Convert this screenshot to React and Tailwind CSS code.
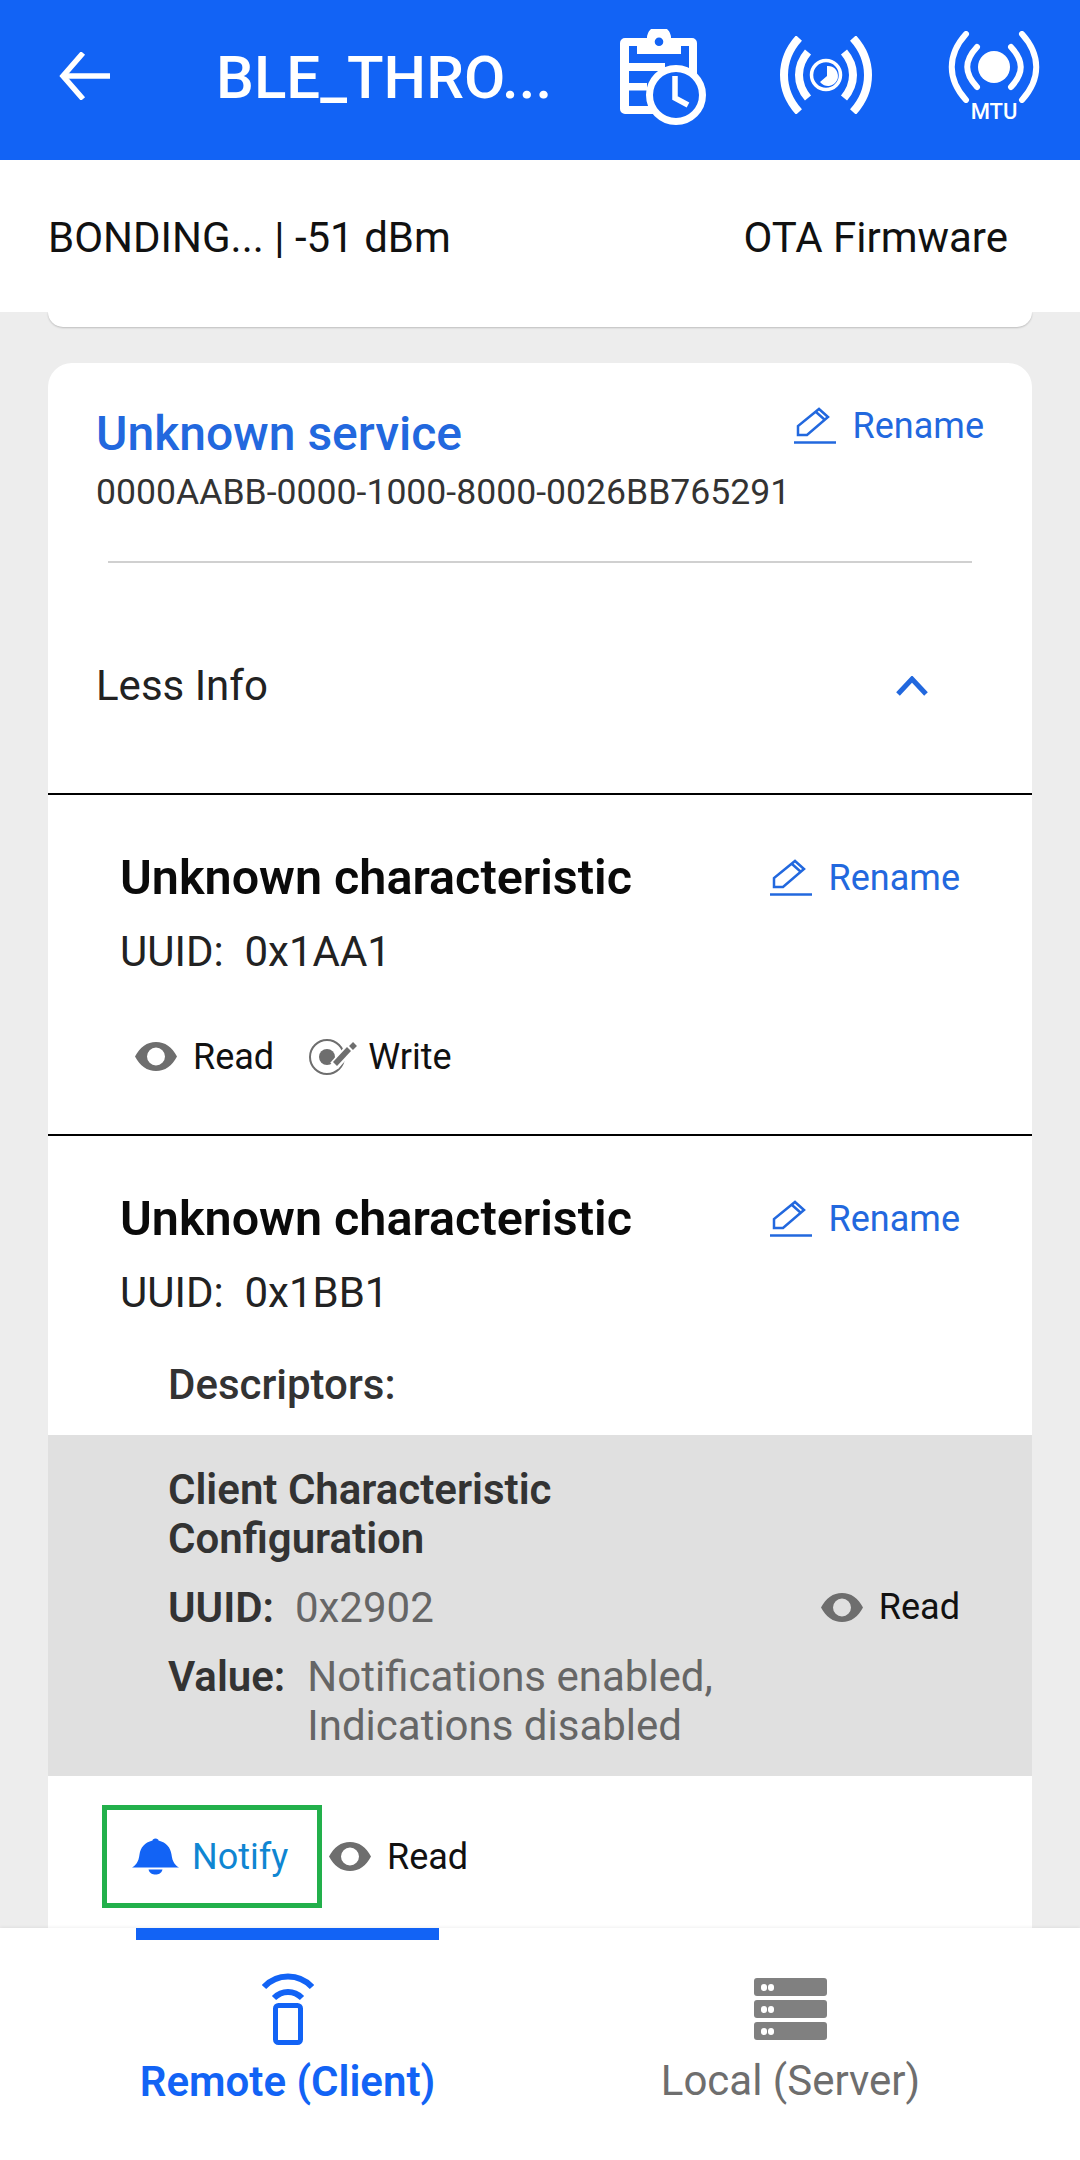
import React from 'react';

const BackIcon = () => (
  <svg width="52" height="48" viewBox="0 0 52 48" fill="none" stroke="white" strokeWidth="5.5">
    <path d="M52 24H6" />
    <path d="M25 1L5 24L25 47" />
  </svg>
);

const LogIcon = () => (
  <svg width="88" height="96" viewBox="0 0 88 96" fill="none">
    <path
      fillRule="evenodd"
      fill="white"
      d="M5 9H27A12 12 0 0 1 51 9H72A5 5 0 0 1 77 14V50H69V17H61V25H17V17H9V77H40V85H5A5 5 0 0 1 0 80V14A5 5 0 0 1 5 9ZM39 8.500A4.300 4.300 0 1 0 39 17.100A4.300 4.300 0 1 0 39 8.500Z"
    />
    <rect x="9" y="34" width="36" height="8" fill="white" />
    <rect x="9" y="54" width="18" height="7.500" fill="white" />
    <circle cx="56" cy="66" r="26.500" fill="#1263F5" stroke="white" strokeWidth="7" />
    <path d="M55 47V69L68 76" stroke="white" strokeWidth="5.500" />
  </svg>
);

const ScanClockIcon = () => (
  <svg width="96" height="78" viewBox="0 0 96 78" fill="none" stroke="white">
    <path d="M21 2C1 24 1 54 21 76" strokeWidth="8" />
    <path d="M75 2C95 24 95 54 75 76" strokeWidth="8" />
    <path d="M30 16C18 30 18 48 30 62" strokeWidth="8" />
    <path d="M66 16C78 30 78 48 66 62" strokeWidth="8" />
    <circle cx="48" cy="39" r="14.500" strokeWidth="3.500" />
    <path d="M49 30V40L42 46A10 10 0 1 0 49 30Z" fill="white" stroke="none" />
  </svg>
);

const MtuIcon = () => (
  <div className="relative flex h-[88px] w-[96px] flex-col items-center">
    <svg width="96" height="72" viewBox="0 0 96 72" fill="none" stroke="white" strokeLinecap="round" strokeWidth="6">
      <path d="M20 3C1 24 1 48 20 69" />
      <path d="M76 3C95 24 95 48 76 69" />
      <path d="M31 16C18 30 18 42 31 56" />
      <path d="M65 16C78 30 78 42 65 56" />
      <circle cx="48" cy="36" r="16" fill="white" stroke="none" />
    </svg>
    <span className="absolute top-[69px] text-[22px] leading-[24px] font-medium text-white">MTU</span>
  </div>
);

const PencilIcon = () => (
  <svg width="42" height="38" viewBox="0 0 42 38" fill="none" stroke="#2268DE" strokeWidth="2.500">
    <path d="M4 28V19L25 2L34 10L13 28Z" />
    <path d="M22 5L31 13" />
    <path d="M0 35.500H42" />
  </svg>
);

const EyeIcon = () => (
  <svg width="42" height="29" viewBox="0 0 42 29">
    <path fillRule="evenodd" fill="#6E6E6E" d="M0 14.500C5 5 12 0 21 0C30 0 37 5 42 14.500C37 24 30 29 21 29C12 29 5 24 0 14.500ZM21 5.500A9 9 0 1 0 21 23.500A9 9 0 0 0 21 5.500Z" />
  </svg>
);

const WriteIcon = () => (
  <svg width="48" height="36" viewBox="0 0 48 36" fill="none">
    <circle cx="18" cy="18" r="17" stroke="#6E6E6E" strokeWidth="2" />
    <circle cx="18" cy="18" r="8" fill="#6E6E6E" />
    <path d="M25 27L41 9" stroke="white" strokeWidth="10" />
    <path d="M26 25L40 10" stroke="#6E6E6E" strokeWidth="5.500" />
    <path d="M42 9L46 5" stroke="#6E6E6E" strokeWidth="5.500" />
  </svg>
);

const BellIcon = () => (
  <svg width="47" height="37" viewBox="0 0 47 36">
    <path fill="#1263F5" d="M23.500 0C25.500 0 26.500 1 26.500 2C34.500 4 38.500 9 39.500 16C40.500 24 43.500 27 47 29H0C3.500 27 6.500 24 7.500 16C8.500 9 12.500 4 20.500 2C20.500 1 21.500 0 23.500 0Z" />
    <path fill="#1263F5" d="M16.500 31H30.500C29.500 35 26.500 36 23.500 36C20.500 36 17.500 35 16.500 31Z" />
  </svg>
);

const ClientIcon = () => (
  <svg width="52" height="72" viewBox="0 0 52 72" fill="none">
    <path d="M2 14C15 0 37 0 50 14" stroke="#1263F5" strokeWidth="6" />
    <path d="M12 25C20 17 32 17 40 25" stroke="#1263F5" strokeWidth="6" />
    <rect x="13.500" y="32.500" width="25" height="37" rx="3" stroke="#1263F5" strokeWidth="5" />
  </svg>
);

const ServerRow = () => (
  <div className="flex h-[18px] w-[73px] items-center gap-[1px] rounded-[3px] bg-[#808080] pl-[7px]">
    <span className="h-[7px] w-[6px] rounded-full bg-white" />
    <span className="h-[7px] w-[6px] rounded-full bg-white" />
  </div>
);

const Rename = () => (
  <div className="flex items-center gap-[17px] text-[#2268DE]">
    <PencilIcon />
    <span className="text-[36px] leading-[40px]">Rename</span>
  </div>
);

const Characteristic = ({ uuid }) => (
  <div className="px-[72px]">
    <div className="flex items-center justify-between">
      <h3 className="text-[48.5px] leading-[56px] font-semibold text-[#0a0a0a]">Unknown characteristic</h3>
      <Rename />
    </div>
    <p className="mt-[22px] text-[42px] leading-[48px] text-[#222]">UUID:&nbsp; {uuid}</p>
  </div>
);

export default function App() {
  return (
    <div className="flex h-[2160px] w-[1080px] flex-col overflow-hidden bg-[#ededed] font-['Roboto',sans-serif]">
      <header className="z-10 flex h-[160px] shrink-0 items-center bg-[#1263F5] pl-[58px]">
        <div className="mt-[-8px]"><BackIcon /></div>
        <h1 className="mb-[4px] ml-[106px] w-[346px] whitespace-nowrap text-[60px] leading-[60px] font-medium text-white">BLE_THRO...</h1>
        <div className="mt-[-6px] ml-[58px]"><LogIcon /></div>
        <div className="mt-[-10px] ml-[70px]"><ScanClockIcon /></div>
        <div className="mt-[-10px] ml-[72px]"><MtuIcon /></div>
      </header>

      <div className="flex h-[152px] shrink-0 items-center justify-between bg-white px-[48px] pt-[4px] text-[42px] leading-[48px] text-[#111]">
        <span>BONDING... | -51 dBm</span>
        <span className="pr-[24px]">OTA Firmware</span>
      </div>

      <div className="min-h-0 flex-1 overflow-hidden px-[48px]">
        <div className="h-[15px] rounded-b-[24px] bg-white shadow-[0_1px_2px_rgba(0,0,0,0.2)]" />

        <div className="mt-[36px] rounded-t-[24px] bg-white pb-[40px]">
          <div className="px-[48px] pt-[41px]">
            <div className="flex items-start justify-between">
              <h2 className="text-[48px] leading-[60px] font-medium text-[#2268DE]">Unknown service</h2>
              <div className="pt-[2px]"><Rename /></div>
            </div>
            <p className="mt-[8px] whitespace-nowrap text-[35.6px] leading-[40px] text-[#333]">0000AABB-0000-1000-8000-0026BB765291</p>
          </div>
          <div className="mx-[60px] mt-[49px] h-[2px] bg-[#d0d0d0]" />
          <div className="flex h-[232px] items-center justify-between border-b-2 border-black pt-[16px] pr-[104px] pl-[48px]">
            <span className="text-[42px] leading-[48px] text-[#222]">Less Info</span>
            <svg width="32" height="20" viewBox="0 0 32 20" fill="none" stroke="#2268DE" strokeWidth="5">
              <path d="M2 18L16 3L30 18" />
            </svg>
          </div>

          <div className="border-b-2 border-black pt-[55px]">
            <Characteristic uuid="0x1AA1" />
            <div className="flex h-[158px] items-center pt-[3px] pl-[87px] text-[36px] text-[#111]">
              <EyeIcon />
              <span className="ml-[16px]">Read</span>
              <div className="ml-[35px]"><WriteIcon /></div>
              <span className="ml-[11px]">Write</span>
            </div>
          </div>

          <div className="pt-[55px]">
            <Characteristic uuid="0x1BB1" />
            <p className="mt-[44px] pl-[120px] text-[42px] leading-[48px] font-medium text-[#333]">Descriptors:</p>
            <div className="mt-[26px] flex h-[341px] items-center justify-between bg-[#e0e0e0] pt-[4px] pr-[72px] pl-[120px] text-[42px] leading-[49px]">
              <div>
                <p className="font-semibold text-[#333]">Client Characteristic<br />Configuration</p>
                <p className="mt-[20px] text-[#666]"><span className="font-semibold text-[#333]">UUID:</span>&nbsp; 0x2902</p>
                <div className="mt-[20px] flex text-[#666]">
                  <span className="font-semibold text-[#333]">Value:</span>
                  <span className="ml-[22px]">Notifications enabled,<br />Indications disabled</span>
                </div>
              </div>
              <div className="flex items-center gap-[16px] text-[36px] text-[#111]">
                <EyeIcon />
                <span>Read</span>
              </div>
            </div>
            <div className="flex items-center pt-[29px] pl-[54px]">
              <div className="flex h-[103px] w-[220px] items-center border-[5px] border-[#22B04B] pl-[25px]">
                <BellIcon />
                <span className="ml-[13px] text-[36px] text-[#0F86D2]">Notify</span>
              </div>
              <div className="ml-[7px]"><EyeIcon /></div>
              <span className="ml-[16px] text-[36px] text-[#111]">Read</span>
            </div>
          </div>
        </div>
      </div>

      <nav className="z-10 flex h-[232px] shrink-0 bg-white shadow-[0_-1px_3px_rgba(0,0,0,0.06)]">
        <div className="flex w-[575px] flex-col items-center">
          <div className="h-[12px] w-[303px] bg-[#1263F5]" />
          <div className="mt-[33px]"><ClientIcon /></div>
          <span className="mt-[13px] text-[42px] leading-[48px] font-semibold text-[#1263F5]">Remote (Client)</span>
        </div>
        <div className="flex w-[431px] flex-col items-center">
          <div className="mt-[50px] flex flex-col gap-[4px]">
            <ServerRow />
            <ServerRow />
            <ServerRow />
          </div>
          <span className="mt-[17px] whitespace-nowrap text-[42px] leading-[48px] text-[#6e6e6e]">Local (Server)</span>
        </div>
      </nav>
    </div>
  );
}
